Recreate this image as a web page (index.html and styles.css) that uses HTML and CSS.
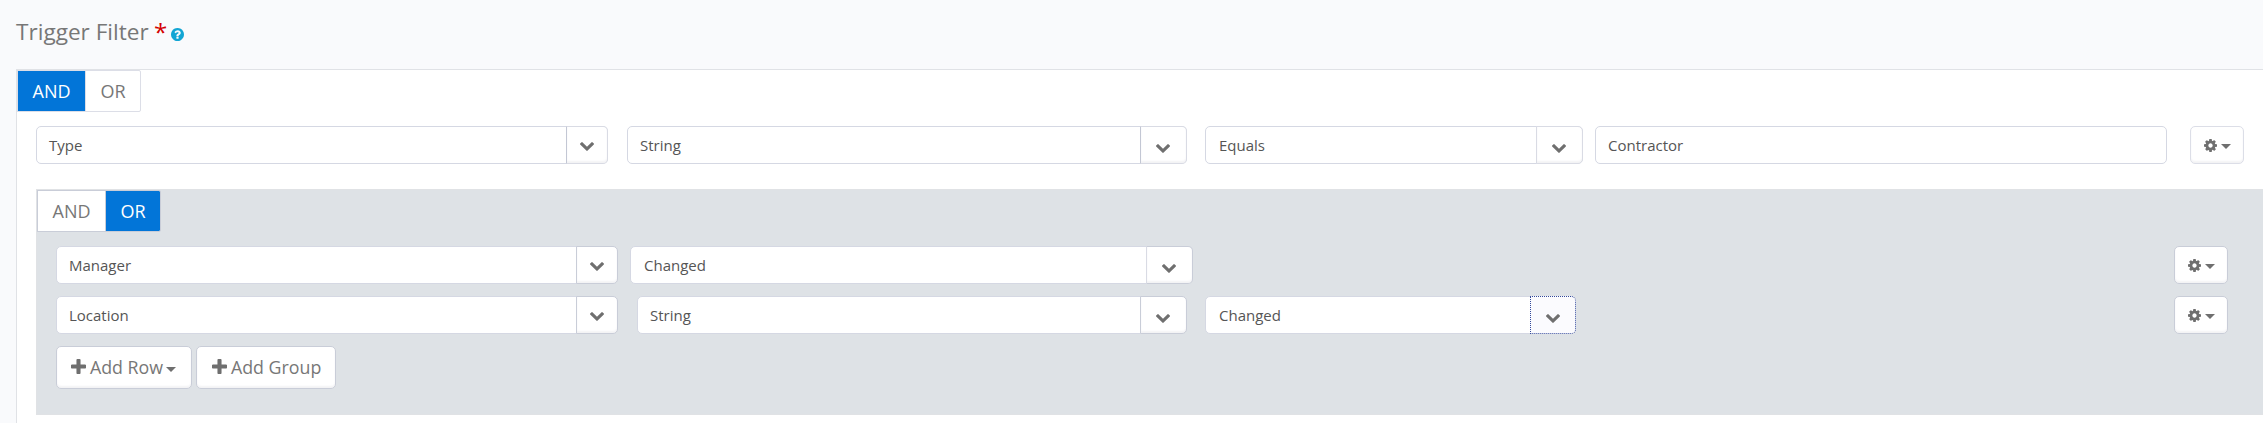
FILE: index.html
```html
<!DOCTYPE html>
<html lang="en">
<head>
<meta charset="utf-8">
<title>Trigger Filter</title>
<link rel="stylesheet" href="styles.css">
</head>
<body>
<svg class="sprite" aria-hidden="true">
  <symbol id="chevron" viewBox="90 533 1612 1035"><path d="M1683 808l-742 741q-19 19-45 19t-45-19l-742-741q-19-19-19-45.500t19-45.500l166-165q19-19 45-19t45 19l531 531 531-531q19-19 45-19t45 19l166 165q19 19 19 45.500t-19 45.500z"/></symbol>
  <symbol id="cog" viewBox="128 128 1536 1536"><path d="M1152 896q0-106-75-181t-181-75-181 75-75 181 75 181 181 75 181-75 75-181zm512-109v222q0 12-8 23t-20 13l-185 28q-19 54-39 91 35 50 107 138 10 12 10 25t-9 23q-27 37-99 108t-94 71q-12 0-26-9l-138-108q-44 23-91 38-16 136-29 186-7 28-36 28h-222q-14 0-24.500-8.500t-11.500-21.500l-28-184q-49-16-90-37l-141 107q-10 9-25 9-14 0-25-11-126-114-165-168-7-10-7-23 0-12 8-23 15-21 51-66.500t54-70.500q-27-50-41-99l-183-27q-13-2-21-12.500t-8-23.500v-222q0-12 8-23t19-13l186-28q14-46 39-92-40-57-107-138-10-12-10-24 0-10 9-23 26-36 98.500-107.500t94.500-71.500q13 0 26 10l138 107q44-23 91-38 16-136 29-186 7-28 36-28h222q14 0 24.500 8.500t11.500 21.500l28 184q49 16 90 37l142-107q9-9 24-9 13 0 25 10 129 119 165 170 7 8 7 22 0 12-8 23-15 21-51 66.500t-54 70.500q26 50 41 98l183 28q13 2 21 12.500t8 23.500z"/></symbol>
  <symbol id="plus" viewBox="192 128 1408 1408"><path d="M1600 736v192q0 40-28 68t-68 28h-416v416q0 40-28 68t-68 28h-192q-40 0-68-28t-28-68v-416h-416q-40 0-68-28t-28-68v-192q0-40 28-68t68-28h416v-416q0-40 28-68t68-28h192q40 0 68 28t28 68v416h416q40 0 68 28t28 68z"/></symbol>
  <symbol id="help" viewBox="128 128 1536 1536"><path d="M1024 1376v-192q0-14-9-23t-23-9h-192q-14 0-23 9t-9 23v192q0 14 9 23t23 9h192q14 0 23-9t9-23zm256-672q0-88-55.500-163t-138.500-116-170-41q-243 0-371 213-15 24 8 42l132 100q7 6 19 6 16 0 25-12 53-68 86-92 34-24 86-24 48 0 85.500 26t37.500 59q0 38-20 61t-68 45q-63 28-115.500 86.500t-52.500 125.500v36q0 14 9 23t23 9h192q14 0 23-9t9-23q0-19 21.500-49.500t54.500-49.500q32-18 49-28.500t46-35 44.500-48 28-60.500 12.500-81zm384 192q0 209-103 385.500t-279.500 279.500-385.500 103-385.500-103-279.500-279.500-103-385.500 103-385.500 279.500-279.500 385.500-103 385.500 103 279.500 279.500 103 385.500z"/></symbol>
  <symbol id="caret" viewBox="0 0 10 5" preserveAspectRatio="none"><path d="M0 0h10L5 5z"/></symbol>
</svg>

<header class="heading">
  <h1 class="title">Trigger Filter</h1>
  <span class="required">*</span>
  <svg class="help"><use href="#help"/></svg>
</header>

<main class="panel">
  <div class="toggle">
    <button class="tab tab-and active">AND</button>
    <button class="tab tab-or">OR</button>
  </div>

  <div class="row row-main">
    <div class="combo w-type"><span class="value">Type</span><button class="drop narrow"><svg class="chevron"><use href="#chevron"/></svg></button></div>
    <div class="combo w-string"><span class="value">String</span><button class="drop"><svg class="chevron"><use href="#chevron"/></svg></button></div>
    <div class="combo w-equals"><span class="value indent">Equals</span><button class="drop light"><svg class="chevron"><use href="#chevron"/></svg></button></div>
    <div class="combo w-text"><span class="value">Contractor</span></div>
    <button class="gear"><svg class="cog"><use href="#cog"/></svg><svg class="caret"><use href="#caret"/></svg></button>
  </div>

  <section class="group">
    <div class="toggle">
      <button class="tab tab-and">AND</button>
      <button class="tab tab-or active">OR</button>
    </div>
    <div class="rows">
      <div class="row">
        <div class="combo w-field"><span class="value">Manager</span><button class="drop narrow"><svg class="chevron"><use href="#chevron"/></svg></button></div>
        <div class="combo w-changed"><span class="value indent">Changed</span><button class="drop light"><svg class="chevron"><use href="#chevron"/></svg></button></div>
        <button class="gear"><svg class="cog"><use href="#cog"/></svg><svg class="caret"><use href="#caret"/></svg></button>
      </div>
      <div class="row">
        <div class="combo w-field"><span class="value">Location</span><button class="drop narrow"><svg class="chevron"><use href="#chevron"/></svg></button></div>
        <div class="combo w-substring"><span class="value">String</span><button class="drop"><svg class="chevron"><use href="#chevron"/></svg></button></div>
        <div class="combo w-subchanged"><span class="value indent">Changed</span><button class="drop focused"><svg class="chevron"><use href="#chevron"/></svg></button></div>
        <button class="gear"><svg class="cog"><use href="#cog"/></svg><svg class="caret"><use href="#caret"/></svg></button>
      </div>
      <div class="actions">
        <button class="add add-row"><svg class="plus"><use href="#plus"/></svg><span>Add Row</span><svg class="caret"><use href="#caret"/></svg></button>
        <button class="add add-group"><svg class="plus"><use href="#plus"/></svg><span>Add Group</span></button>
      </div>
    </div>
  </section>
</main>
</body>
</html>
```

FILE: styles.css
```css
* { box-sizing: border-box; }
html, body { height: 100%; }
body {
  margin: 0;
  overflow: hidden;
  background: #f9fafc;
  color: #777;
  font-family: "Open Sans", sans-serif;
}
button {
  margin: 0;
  padding: 0;
  font: inherit;
  color: inherit;
  background: #fff;
  border: 1px solid #c9cdd8;
}
svg { display: block; flex: none; fill: #6f6f6f; }
.sprite { position: absolute; width: 0; height: 0; }

.heading {
  display: flex;
  align-items: flex-start;
  height: 69px;
  padding-left: 16px;
}
.title {
  width: 133px;
  margin: 16px 0 0;
  font-size: 22.6px;
  line-height: 32px;
  font-weight: 400;
  white-space: nowrap;
}
.required {
  width: 13px;
  margin: 16px 0 0 5px;
  font-size: 24px;
  line-height: 32px;
  color: #d40000;
}
.help { width: 13px; height: 13px; margin: 28px 0 0 3.5px; fill: #12a5d4; }

.panel {
  height: 354px;
  margin-left: 16px;
  background: #fff;
  border: 1px solid #e0e2e6;
  border-width: 1px 0 0 1px;
}

.toggle { display: flex; }
.tab { height: 42px; font-size: 18px; line-height: 40px; border-color: #dcdee7; }
.tab-and { width: 69px; }
.tab-or { width: 56px; margin-left: -1px; border-radius: 0 2px 2px 0; }
.tab.active { color: #fff; background: #0275d8; background-clip: padding-box; }

.row { display: flex; height: 38px; }
.row-main { margin: 14px 19px 0 19px; }
.combo {
  display: flex;
  height: 38px;
  background: #fff;
  border: 1px solid #d5d8e3;
  border-radius: 5px;
}
.value {
  flex: 1;
  padding-left: 12px;
  font-size: 15px;
  line-height: 36px;
  color: #555;
}
.value.indent { padding-left: 13px; }
.drop {
  display: flex;
  justify-content: center;
  width: 47px;
  height: 38px;
  margin: -1px -1px -1px 0;
  padding: 17px 1px 0 0;
  border-color: #d9dbe4;
  border-left-color: #c3c7d4;
  border-radius: 0 5px 5px 0;
  box-shadow: inset 0 -2px 2px #f3f3f5;
}
.drop.narrow { width: 42px; padding: 15px 0 0; }
.drop.light { border-left-color: #d9dbe4; }
.drop.focused { width: 46px; border: 1px dotted #33499a; background: #fbfbfe; box-shadow: none; }
.chevron { width: 14px; height: 9px; }

.w-type { width: 572px; }
.w-string { width: 560px; margin-left: 19px; }
.w-equals { width: 378px; margin-left: 18px; }
.w-text { width: 572px; margin-left: 12px; }
.w-field { width: 562px; }
.w-changed { width: 563px; margin-left: 12px; }
.w-substring { width: 550px; margin-left: 19px; }
.w-subchanged { width: 371px; margin-left: 18px; }

.gear {
  display: flex;
  justify-content: center;
  align-items: center;
  gap: 4px;
  width: 54px;
  height: 38px;
  margin-left: auto;
  border-color: #dcdee7;
  border-radius: 5px;
  box-shadow: inset 0 -2px 2px #f3f3f5;
}
.cog { width: 13px; height: 13px; }
.caret { width: 10px; height: 5px; }
.gear .caret { margin-top: 2px; }

.group {
  height: 226px;
  margin: 25px 0 0 19px;
  background: #dee2e6;
  border: 1px solid #e0e2e5;
  border-right: 0;
}
.group button { border-color: #c9cdd8; }
.group .drop.light { border-left-color: #d9dbe4; }
.group .drop.focused { border-color: #33499a; }
.rows {
  display: flex;
  flex-direction: column;
  gap: 12px;
  padding: 14px 35px 0 19px;
}
.actions { display: flex; gap: 4px; }
.add {
  display: flex;
  align-items: center;
  height: 43px;
  padding: 0 0 1px 14px;
  font-size: 17.8px;
  line-height: 40px;
  border-radius: 5px;
  box-shadow: inset 0 -2px 2px #f3f3f5;
}
.add-row { width: 136px; }
.add-group { width: 140px; padding-left: 15px; }
.plus { width: 15px; height: 15px; margin: 0 4px 1px 0; }
.add .caret { margin: 4px 0 0 3px; }
```
